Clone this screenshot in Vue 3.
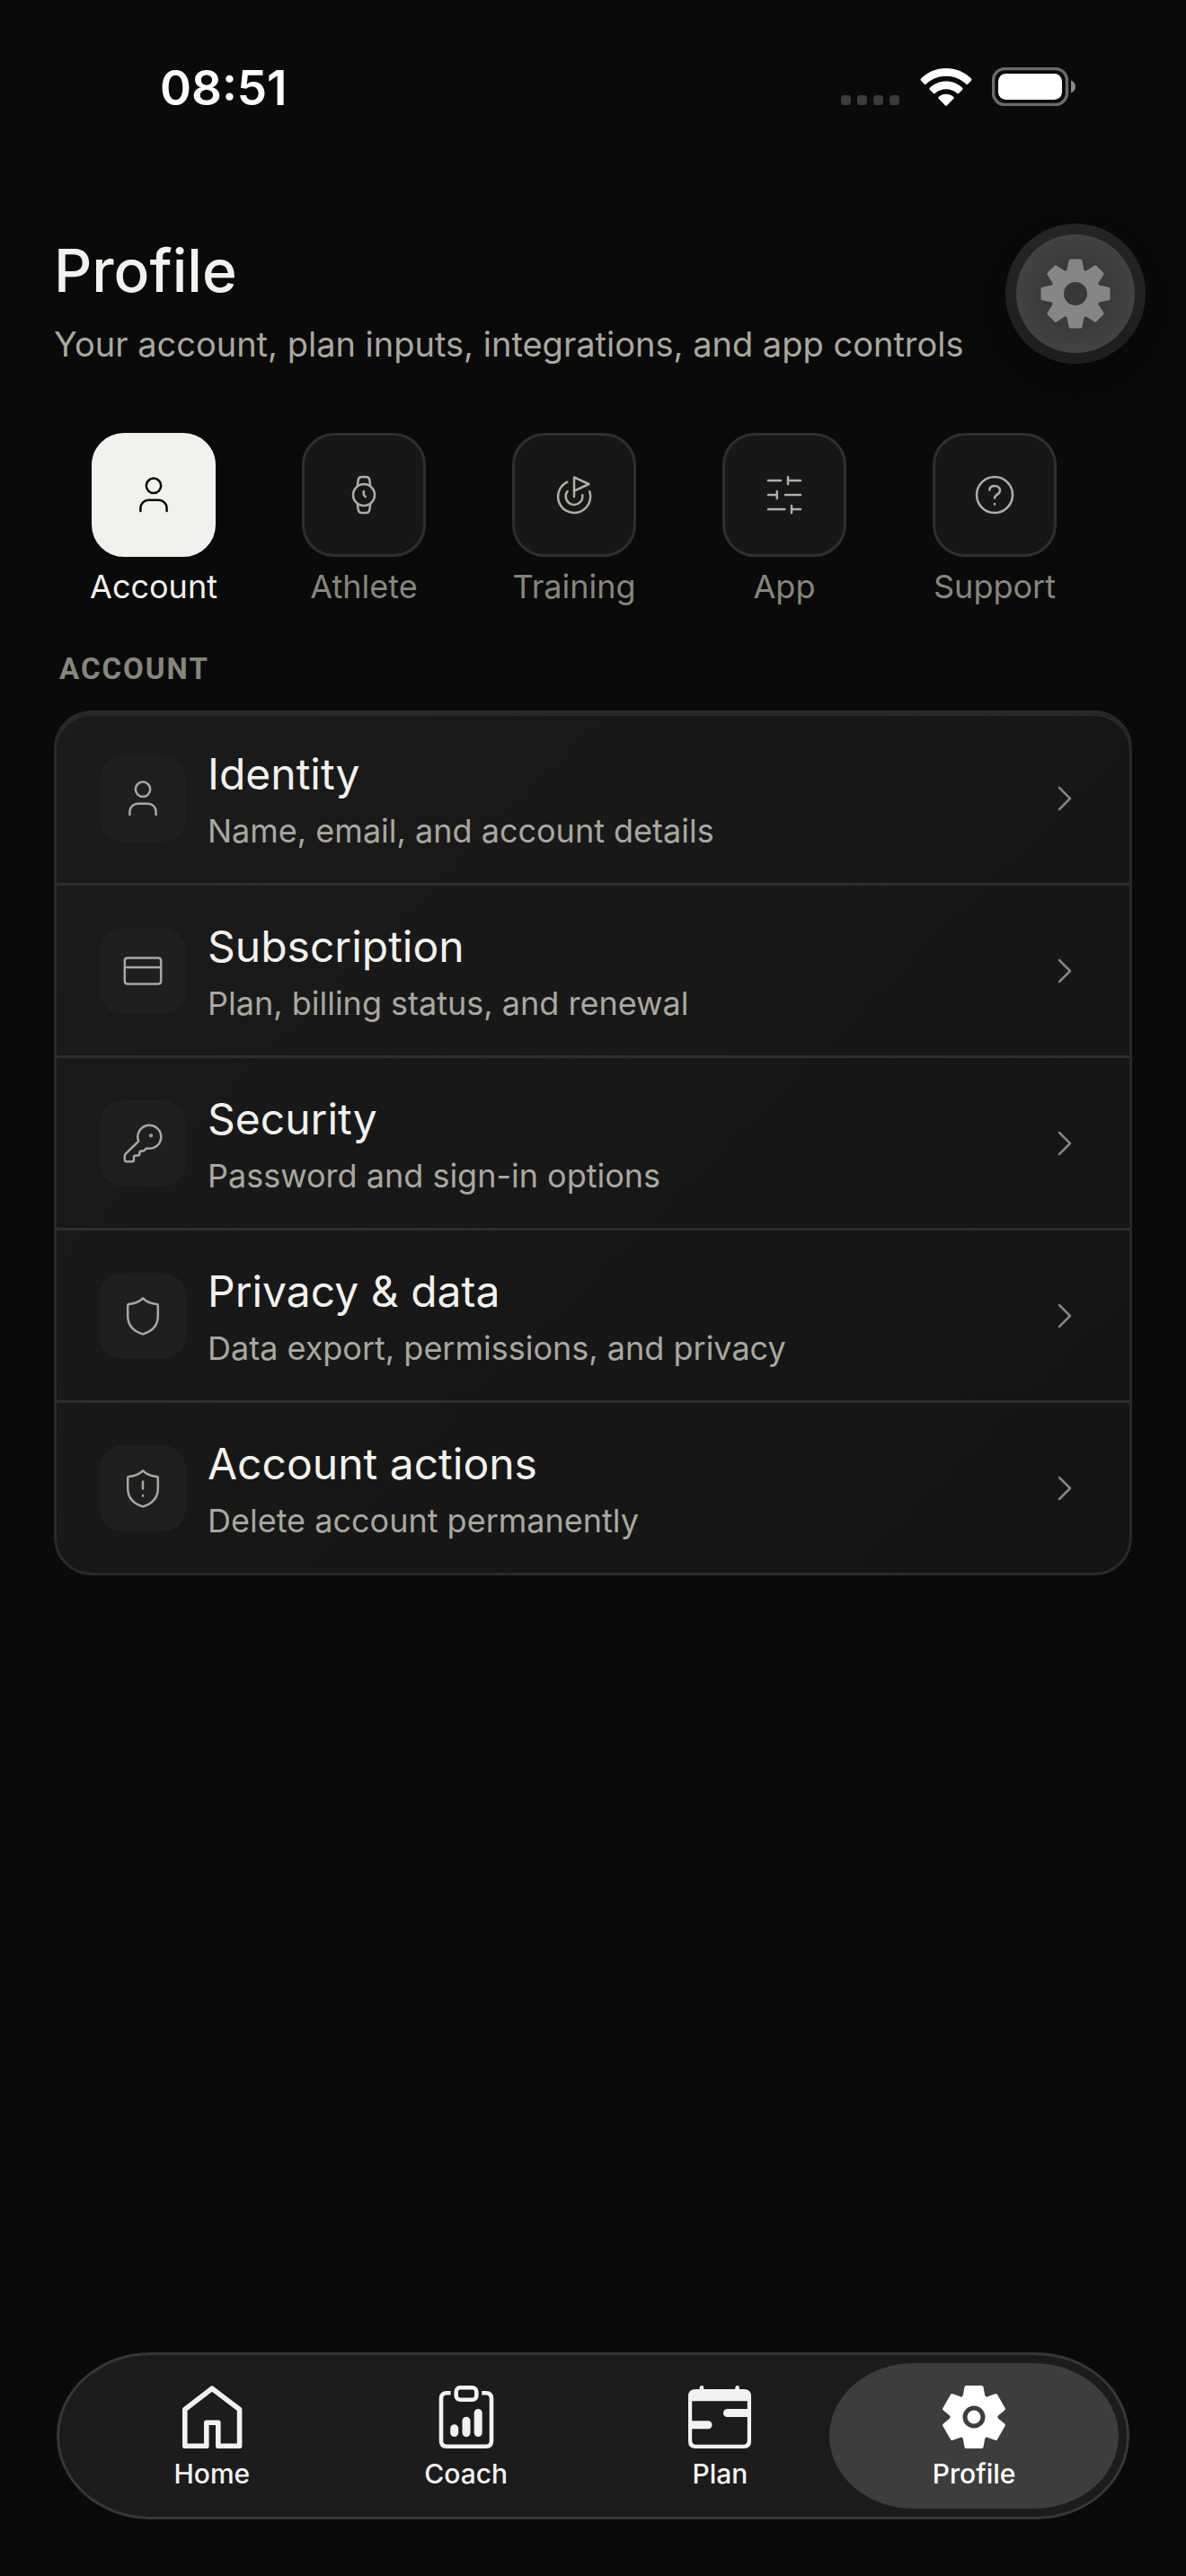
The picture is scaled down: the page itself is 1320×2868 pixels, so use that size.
<script setup>
import { ref } from 'vue'

const categories = [
  { id: 'account', label: 'Account', icon: 'user' },
  { id: 'athlete', label: 'Athlete', icon: 'watch' },
  { id: 'training', label: 'Training', icon: 'goal' },
  { id: 'app', label: 'App', icon: 'sliders' },
  { id: 'support', label: 'Support', icon: 'help' },
]

const rows = [
  { icon: 'user', title: 'Identity', detail: 'Name, email, and account details' },
  { icon: 'card', title: 'Subscription', detail: 'Plan, billing status, and renewal' },
  { icon: 'key', title: 'Security', detail: 'Password and sign-in options' },
  { icon: 'shield', title: 'Privacy & data', detail: 'Data export, permissions, and privacy' },
  { icon: 'alert', title: 'Account actions', detail: 'Delete account permanently' },
]

const shield =
  'M24 4.4C20 8.6 14.2 10.6 8.4 10.9Q7.2 11 7.2 12.2V24C7.2 33.5 13 41 24 44.4C35 41 40.8 33.5 40.8 24V12.2Q40.8 11 39.6 10.9C33.8 10.6 28 8.6 24 4.4Z'

// 48-unit line icons
const icons = {
  user: 'M24 5.6a8.2 8.2 0 1 0 0 16.4a8.2 8.2 0 1 0 0-16.4ZM9.4 42v-3.2a9 9 0 0 1 9-9h11.2a9 9 0 0 1 9 9V42',
  watch:
    'M24 12a12 12 0 1 0 0 24a12 12 0 1 0 0-24ZM16.7 14.4l1-7a4 4 0 0 1 4-3.4h4.6a4 4 0 0 1 4 3.4l1 7M16.7 33.6l1 7a4 4 0 0 0 4 3.4h4.6a4 4 0 0 0 4-3.4l1-7M23.8 20v3.6q0 1.2 2 2.4',
  goal:
    'M16.3 9.7A18 18 0 1 0 41.2 20.4M16.6 20A9.3 9.3 0 1 0 33.2 24M24 26V4.4L40.4 12L24 19.6',
  sliders:
    'M6 8H20M28 4v8M28 8H42M6 24H15.8M15.8 20v8M25 24H42M6 40H24.4M32 36v8M32 40H42',
  help:
    'M24 4a20 20 0 1 0 0 40a20 20 0 1 0 0-40ZM18.2 18.6C18.4 15.6 20.9 13.9 24.1 13.9C27.6 13.9 30 16.2 30 19.2C30 23.6 24 23.6 24 27.4M24 34v.4',
  card: 'M7 9.5H41Q44.2 9.5 44.2 12.7V35.3Q44.2 38.5 41 38.5H7Q3.8 38.5 3.8 35.3V12.7Q3.8 9.5 7 9.5ZM3.8 20H44.2',
  key:
    'M19.2 21.6A13 13 0 1 1 28 29.4L25.8 31.6Q25 32.4 23.8 32.4H22.4Q20.4 32.4 20.4 34.4V35.6Q20.4 37.6 18.4 37.6H16Q14 37.6 14 39.6V42.2Q14 44.2 12 44.2H5.8Q3.8 44.2 3.8 42.2V38Q3.8 36.6 4.8 35.6ZM33 14.4a.9 .9 0 1 0 0 1.8a.9 .9 0 1 0 0-1.8Z',
  shield,
  alert: shield + 'M24 16.6v8M24 32v.4',
}

const active = ref('account')
const octagonTeeth = [0, 45, 90, 135, 180, 225, 270, 315]
const hexTeeth = [0, 60, 120, 180, 240, 300]
</script>

<template>
  <div class="app">
    <div class="status">
      <time class="clock">08:51</time>
      <div class="signals">
        <svg width="66" height="12" viewBox="0 0 66 12" fill="#3b3b3b" class="dots">
          <rect v-for="n in 4" :key="n" :x="(n - 1) * 18" width="11" height="11" rx="3.5" />
        </svg>
        <svg width="58" height="42" viewBox="0 0 58 42" fill="#fff" class="wifi">
          <path d="M29 0C40 0 50 4.400 57 11.400Q58 12.600 57 13.700L53.400 17.400Q52.300 18.400 51.200 17.400C45 11.800 37.500 8.700 29 8.700C20.500 8.700 13 11.800 6.800 17.400Q5.700 18.400 4.600 17.400L1 13.700Q0 12.600 1 11.400C8 4.400 18 0 29 0Z" />
          <path d="M29 14.600C36.100 14.600 42.400 17.300 47.100 21.700Q48.200 22.800 47.100 23.900L43.200 27.700Q42.100 28.700 41 27.700C37.700 24.900 33.600 23.200 29 23.200C24.400 23.200 20.300 24.900 17 27.700Q15.900 28.700 14.800 27.700L10.900 23.900Q9.800 22.800 10.900 21.700C15.600 17.300 21.900 14.600 29 14.600Z" />
          <path d="M29 28.700C32.300 28.700 35 29.900 37.200 31.800Q38.300 32.900 37.200 34L30.100 41.200Q29 42.200 27.900 41.200L20.800 34Q19.700 32.900 20.800 31.800C23 29.900 25.700 28.700 29 28.700Z" />
        </svg>
        <svg width="94" height="43" viewBox="0 0 94 43" class="battery">
          <rect x="1.500" y="1.500" width="82" height="40" rx="13" fill="none" stroke="#6b6b6b" stroke-width="3.500" />
          <rect x="7" y="7" width="71" height="29" rx="8.500" fill="#fff" />
          <path d="M88 14.500C91.500 16 93 18.500 93 21.500S91.500 27 88 28.500Z" fill="#8a8a8a" />
        </svg>
      </div>
    </div>

    <header class="header">
      <div class="heading">
        <h1>Profile</h1>
        <p>Your account, plan inputs, integrations, and app controls</p>
      </div>
      <button class="gear" type="button" aria-label="Settings">
        <span class="gear-face">
          <svg width="78" height="78" viewBox="-39 -39 78 78">
            <g fill="#868686" stroke="#868686" stroke-width="4" stroke-linejoin="round">
              <circle r="25.500" />
              <path v-for="a in octagonTeeth" :key="a" :transform="`rotate(${a})`" d="M-10 -22Q-7.500 -25 -7 -28.500L-5.400 -36.500H5.400L7 -28.500Q7.500 -25 10 -22Z" />
            </g>
            <circle r="13" fill="#383838" />
          </svg>
        </span>
      </button>
    </header>

    <nav class="categories" aria-label="Settings categories">
      <button
        v-for="c in categories"
        :key="c.id"
        type="button"
        class="category"
        :class="{ selected: active === c.id }"
        @click="active = c.id"
      >
        <span class="tile">
          <svg class="line-icon" viewBox="0 0 48 48"><path :d="icons[c.icon]" /></svg>
        </span>
        <span>{{ c.label }}</span>
      </button>
    </nav>

    <main class="section">
      <h2>ACCOUNT</h2>
      <ul class="card">
        <li v-for="r in rows" :key="r.title">
          <button type="button" class="row">
            <span class="badge">
              <svg class="line-icon" viewBox="0 0 48 48"><path :d="icons[r.icon]" /></svg>
            </span>
            <span class="copy">
              <span class="title">{{ r.title }}</span>
              <span class="detail">{{ r.detail }}</span>
            </span>
            <svg class="line-icon chevron" viewBox="0 0 48 48"><path d="M18 12L30 24L18 36" /></svg>
          </button>
        </li>
      </ul>
    </main>

    <nav class="tabbar" aria-label="Main">
      <a href="#home" class="tab">
        <svg width="72" height="72" viewBox="0 0 72 72" fill="none" stroke="currentColor" stroke-width="5.600" stroke-linejoin="round">
          <path d="M36 4.200L5.800 27.500V68.200H29.800V42.200H42.800V68.200H66.600V27.500Z" />
        </svg>
        <span>Home</span>
      </a>
      <a href="#coach" class="tab">
        <svg width="72" height="72" viewBox="0 0 72 72" fill="none" stroke="currentColor" stroke-width="4.600">
          <path d="M18.600 9.300H14.200Q8 9.300 8 15.500V62.500Q8 68.700 14.200 68.700H57.800Q64 68.700 64 62.500V15.500Q64 9.300 57.800 9.300H53.200" />
          <rect x="24.700" y="3.200" width="22.600" height="13.500" rx="4.500" />
          <path d="M22.700 48.800V53.500M36 40.200V53.500M49.200 31.500V53.500" stroke-width="9" stroke-linecap="round" />
        </svg>
        <span>Coach</span>
      </a>
      <a href="#plan" class="tab">
        <svg width="72" height="72" viewBox="0 0 72 72" fill="currentColor">
          <path fill-rule="evenodd" d="M9 5H63Q71 5 71 13V63Q71 71 63 71H9Q1 71 1 63V13Q1 5 9 5ZM5.200 18.200V62Q5.200 66.700 9.800 66.700H62.200Q66.800 66.700 66.800 62V18.200Z" />
          <rect x="13.700" y="1" width="4.600" height="10" rx="2.300" />
          <rect x="53.400" y="1" width="4.600" height="10" rx="2.300" />
          <path d="M68 27H44.500a4.500 4.500 0 0 0 0 9H68ZM4 40.200H23a4.500 4.500 0 0 1 0 9H4Z" />
        </svg>
        <span>Plan</span>
      </a>
      <a href="#profile" class="tab current" aria-current="page">
        <svg width="72" height="72" viewBox="-36 -36 72 72">
          <g fill="currentColor" stroke="currentColor" stroke-width="4" stroke-linejoin="round">
            <circle r="23.500" />
            <path v-for="a in hexTeeth" :key="a" :transform="`rotate(${a})`" d="M-15 -18Q-11 -20.500 -10.200 -24L-8.600 -33H8.600L10.200 -24Q11 -20.500 15 -18Z" />
          </g>
          <circle r="10" fill="none" stroke="#3d3d3d" stroke-width="5" />
        </svg>
        <span>Profile</span>
      </a>
    </nav>
  </div>
</template>

<style>
body {
  background: #0a0a0a;
}
</style>

<style scoped>
.app {
  min-height: 100vh;
  display: flex;
  flex-direction: column;
  box-sizing: border-box;
  background: #0a0a0a;
  color: #f2f1ed;
  font-family: Inter, "Liberation Sans", sans-serif;
}

button {
  margin: 0;
  padding: 0;
  border: 0;
  background: none;
  color: inherit;
  font: inherit;
  text-align: left;
  cursor: pointer;
}

svg {
  display: block;
  flex: none;
}

.status {
  height: 196px;
  padding: 0 122px 0 178px;
  display: flex;
  align-items: center;
  justify-content: space-between;
}

.clock {
  color: #fff;
  font-size: 53px;
  font-weight: 600;
}

.signals {
  padding-bottom: 3px;
  display: flex;
  align-items: center;
}

.dots {
  align-self: flex-end;
}

.wifi {
  margin: 0 22px;
}

.header {
  margin-top: 53px;
  padding: 0 45px 0 60px;
  display: flex;
  align-items: flex-start;
  justify-content: space-between;
}

.heading {
  padding-top: 12px;
}

h1 {
  margin: 0 0 18px;
  font-size: 66px;
  line-height: 80px;
  font-weight: 500;
}

.heading p {
  margin: 0;
  color: #a9a89f;
  font-size: 38px;
  line-height: 48px;
}

.gear {
  flex: none;
  padding: 12px;
  border-radius: 50%;
  background: linear-gradient(#252525, #1e1e1e);
  box-shadow: 0 12px 30px rgba(0, 0, 0, 0.2);
}

.gear-face {
  width: 132px;
  height: 132px;
  display: grid;
  place-items: center;
  border-radius: 50%;
  background: radial-gradient(circle, #363636 20%, #434343 72%);
}

.categories {
  margin-top: 75px;
  padding: 0 60px;
  display: flex;
  gap: 12px;
  overflow: hidden;
}

.category {
  flex: 0 0 222px;
  display: flex;
  flex-direction: column;
  align-items: center;
  gap: 12px;
  color: #87867c;
  font-size: 36px;
  line-height: 42px;
}

.tile {
  width: 138px;
  height: 138px;
  box-sizing: border-box;
  display: grid;
  place-items: center;
  border: 3px solid #2f2f2f;
  border-radius: 36px;
  background: #171717;
  color: #b0afa6;
}

.selected {
  color: #f2f1ed;
}

.selected .tile {
  border-color: #f2f1ed;
  background: #f2f1ed;
  color: #090909;
}

.line-icon {
  width: 48px;
  height: 48px;
  fill: none;
  stroke: currentColor;
  stroke-width: 2.5;
  stroke-linecap: round;
  stroke-linejoin: round;
}

.section {
  padding: 48px 60px;
}

h2 {
  margin: 0 0 24px;
  padding-left: 6px;
  color: #87867c;
  font-family: Roboto, "Liberation Sans", sans-serif;
  font-size: 33px;
  line-height: 45px;
  font-weight: 700;
  letter-spacing: 2px;
}

.card {
  margin: 0;
  padding: 0;
  list-style: none;
  border: 3px solid #292929;
  border-radius: 42px;
  background: linear-gradient(135deg, #1b1b1b, #141414);
  box-shadow: inset 0 3px 0 #292929;
}

.card li + li {
  border-top: 3px solid #2e2e2e;
}

.row {
  width: 100%;
  min-height: 189px;
  padding: 0 48px;
  display: flex;
  align-items: center;
  gap: 24px;
}

.badge {
  width: 96px;
  height: 96px;
  flex: none;
  display: grid;
  place-items: center;
  border-radius: 26px;
  background: #1f1f1f;
  color: #a9a89f;
}

.copy {
  flex: 1;
  padding-top: 3px;
  display: flex;
  flex-direction: column;
  gap: 9px;
}

.title {
  font-size: 48px;
  line-height: 60px;
}

.detail {
  color: #a9a89f;
  font-size: 36px;
  line-height: 48px;
}

.chevron {
  color: #87867c;
}

.tabbar {
  margin: auto 63px 63px;
  padding: 9px;
  display: flex;
  border: 3px solid #373737;
  border-radius: 105px / 93px;
  background: #1c1c1c;
}

.tab {
  flex: 1;
  height: 162px;
  box-sizing: border-box;
  padding-top: 3px;
  display: flex;
  flex-direction: column;
  align-items: center;
  justify-content: center;
  gap: 9px;
  border-radius: 94px / 81px;
  color: #f2f2f2;
  font-size: 30px;
  line-height: 36px;
  font-weight: 500;
  text-decoration: none;
}

.tab + .tab {
  margin-left: -39px;
}

.current {
  background: #3d3d3d;
  color: #fff;
}
</style>
